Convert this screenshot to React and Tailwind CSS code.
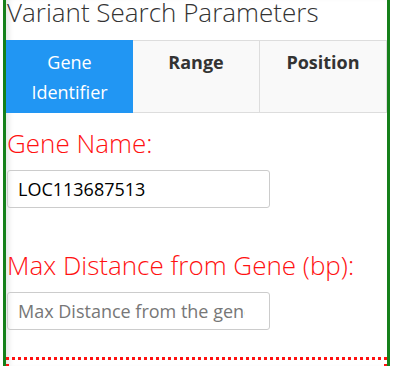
export default function App() {
  const tabs = [
    { label: 'Gene Identifier', active: true },
    { label: 'Range', active: false },
    { label: 'Position', active: false },
  ];

  return (
    <div className="h-[366px] overflow-hidden bg-white font-['Open_Sans',sans-serif]">
      <div className="ml-[3px] w-[387px] h-full border-x-[3px] border-[#15801a] shadow-[inset_6px_0_6px_-4px_rgba(0,0,0,0.12)]">
        {/* Title */}
        <h2 className="pl-px text-[26px] leading-[24px] font-light text-[#333]">
          Variant Search Parameters
        </h2>

        {/* Tabs */}
        <div className="mt-[16px] flex">
          {tabs.map((t) => (
            <div
              key={t.label}
              className={`w-1/3 h-[73px] px-2 pt-[6px] text-center text-[18px] leading-[30px] border ${
                t.active
                  ? 'bg-[#2196f3] border-[#2196f3] text-white font-normal'
                  : 'bg-[#f9f9f9] border-[#ddd] border-l-0 text-[#333] font-bold'
              }`}
            >
              {t.active ? (
                <>
                  Gene
                  <br />
                  Identifier
                </>
              ) : (
                t.label
              )}
            </div>
          ))}
        </div>

        {/* Gene name */}
        <div className="pl-px pt-[15px]">
          <label className="block text-[26px] leading-[30px] font-light text-[#ff1111]">Gene Name:</label>
          <input
            type="text"
            defaultValue="LOC113687513"
            className="mt-[12px] w-[263px] h-[38px] pl-[10px] pr-[24px] rounded-[3px] border border-[#ccc] text-[18px] text-black outline-none"
          />
        </div>

        {/* Max distance */}
        <div className="pl-px pt-[42px]">
          <label className="block text-[26px] leading-[30px] font-light text-[#ff1111]">
            Max Distance from Gene (bp):
          </label>
          <input
            type="text"
            placeholder="Max Distance from the gene"
            className="mt-[12px] w-[263px] h-[38px] pl-[10px] pr-[24px] rounded-[3px] border border-[#ccc] text-[18px] text-black placeholder:text-[#777] outline-none"
          />
        </div>

        {/* Next section (dotted) */}
        <div className="mt-[27px] h-[40px] border-[3px] border-dotted border-[#ff1111]" />
      </div>
    </div>
  );
}
